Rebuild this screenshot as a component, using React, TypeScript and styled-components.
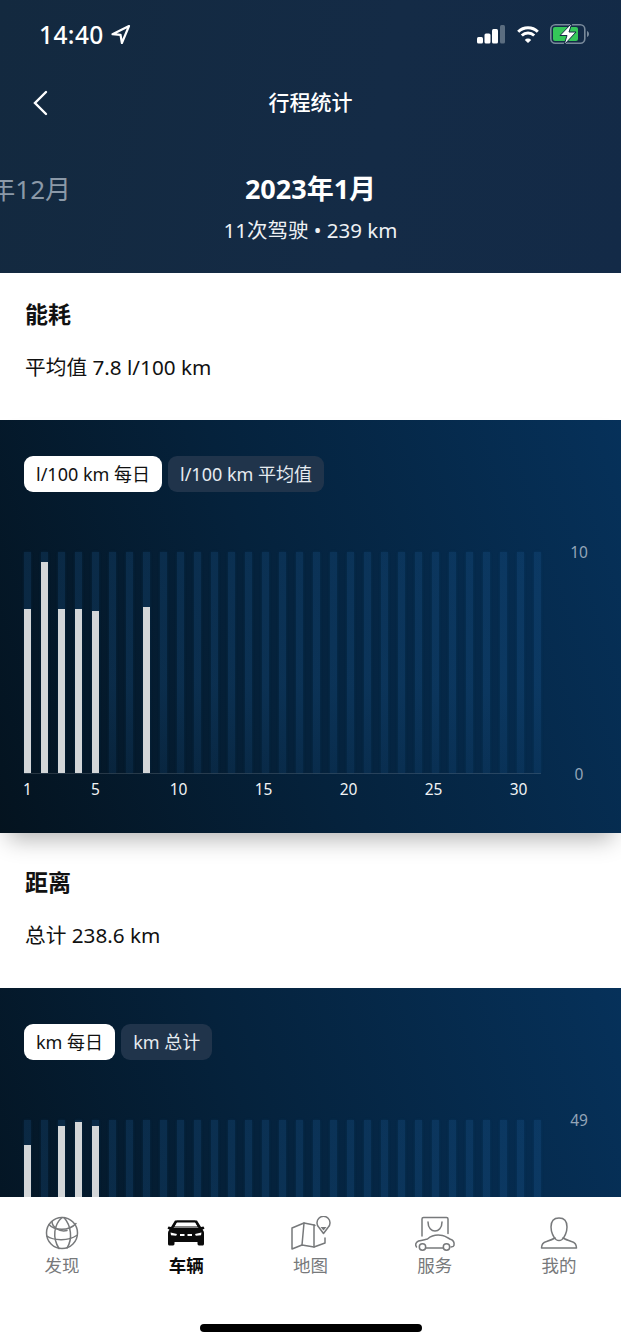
import React from 'react';
import styled, { createGlobalStyle } from 'styled-components';

const GlobalStyle = createGlobalStyle`
  html, body { margin: 0; padding: 0; background: #fff; }
  body { font-family: "Noto Sans", "Noto Sans CJK SC", sans-serif; }
  * { box-sizing: border-box; }
`;

const Page = styled.div`
  width: 621px;
  height: 1344px;
  display: flex;
  flex-direction: column;
  overflow: hidden;
`;

const Header = styled.header`
  height: 273px;
  flex: none;
  background: linear-gradient(100deg, #13293f 0%, #142b46 60%, #132a47 100%);
  color: #fff;
`;

const StatusBar = styled.div`
  height: 68px;
  padding: 0 31px 0 39px;
  display: flex;
  align-items: center;
  justify-content: space-between;
`;

const Time = styled.div`
  display: flex;
  align-items: center;
  gap: 6px;
  font-size: 24.5px;
  font-weight: 500;
  letter-spacing: 0.4px;
`;

const StatusIcons = styled.div`
  display: flex;
  align-items: center;
  gap: 11px;
`;

const NavBar = styled.div`
  height: 66px;
  display: grid;
  grid-template-columns: 82px 1fr 82px;
  align-items: center;
`;

const BackButton = styled.div`
  padding: 4px 0 0 32px;
  display: flex;
  align-items: center;
`;

const NavTitle = styled.div`
  text-align: center;
  font-size: 21px;
  font-weight: 500;
`;

const MonthRow = styled.div`
  margin-top: 34px;
  display: grid;
  grid-template-columns: 71px 1fr 71px;
  align-items: center;
  height: 38px;
`;

const PrevMonth = styled.div`
  overflow: hidden;
  display: flex;
  justify-content: flex-end;
  white-space: nowrap;
  font-size: 26px;
  color: #8b99a8;
`;

const CurrentMonth = styled.div`
  text-align: center;
  font-size: 27px;
  font-weight: 700;
`;

const Summary = styled.div`
  margin-top: 8px;
  text-align: center;
  font-size: 20.5px;
  color: #eef1f4;
`;

const Scroller = styled.main`
  flex: 1;
  min-height: 0;
  overflow: hidden;
`;

const InfoBlock = styled.section<{ $height: number; $top: number }>`
  height: ${(p) => p.$height}px;
  padding: ${(p) => p.$top}px 25px 0;
  background: #fff;
  color: #111;
`;

const InfoTitle = styled.h2`
  margin: 0;
  font-size: 23px;
  line-height: 32px;
  font-weight: 700;
`;

const InfoLine = styled.p`
  margin: 21px 0 0;
  font-size: 20.7px;
  line-height: 32px;
`;

const ChartPanel = styled.section`
  position: relative;
  z-index: 1;
  height: 413px;
  padding: 36px 0 0 24px;
  background: linear-gradient(72deg, #04131f 0%, #05223c 45%, #06315a 100%);
  box-shadow: 0 14px 22px -8px rgba(0, 0, 0, 0.3);
`;

const Pills = styled.div`
  display: flex;
  gap: 6px;
`;

const Pill = styled.div<{ $active?: boolean }>`
  height: 36px;
  padding: 0 12px 2px;
  display: flex;
  align-items: center;
  border-radius: 9px;
  font-size: 18px;
  white-space: nowrap;
  background: ${(p) => (p.$active ? '#fff' : '#20344b')};
  color: ${(p) => (p.$active ? '#111' : '#e6ebf0')};
`;

const PlotRow = styled.div`
  margin-top: 60px;
  display: flex;
  height: 222px;
`;

const Bars = styled.div`
  display: grid;
  grid-template-columns: repeat(31, 7px);
  column-gap: 10px;
  width: 517px;
  border-bottom: 1px solid rgba(255, 255, 255, 0.14);
`;

const Track = styled.div`
  height: 221px;
  display: flex;
  align-items: flex-end;
  background: linear-gradient(180deg, rgba(34, 106, 172, 0.2) 0%, rgba(34, 106, 172, 0.22) 60%, rgba(34, 106, 172, 0.14) 100%);
  box-shadow: 0 0 3px rgba(34, 106, 172, 0.14);
`;

const Fill = styled.div`
  width: 100%;
  background: #d3d6d8;
`;

const YAxis = styled.div`
  flex: 1;
  margin: -10px 0 -10px;
  padding-right: 4px;
  display: flex;
  flex-direction: column;
  justify-content: space-between;
  align-items: center;
  font-size: 15.5px;
  line-height: 20px;
  color: #93a5b8;
`;

const XAxis = styled.div`
  margin-top: 5px;
  display: grid;
  grid-template-columns: repeat(31, 7px);
  column-gap: 10px;
  width: 517px;
  font-size: 15.5px;
  line-height: 20px;
  color: #f1f3f5;
`;

const Tick = styled.div<{ $wide?: boolean }>`
  display: flex;
  justify-content: center;
  white-space: nowrap;
  padding-right: ${(p) => (p.$wide ? 4 : 0)}px;
`;

const TabBar = styled.nav`
  position: relative;
  z-index: 2;
  flex: none;
  height: 147px;
  background: #fff;
  display: flex;
  flex-direction: column;
`;

const Tabs = styled.div`
  display: grid;
  grid-template-columns: repeat(5, 1fr);
  padding-top: 19px;
`;

const Tab = styled.div<{ $active?: boolean }>`
  display: flex;
  flex-direction: column;
  align-items: center;
  font-size: 17.5px;
  line-height: 24px;
  font-weight: ${(p) => (p.$active ? 700 : 400)};
  color: ${(p) => (p.$active ? '#0b0b0b' : '#77797b')};
`;

const TabIcon = styled.svg`
  display: block;
  width: 44px;
  height: 37px;
  fill: none;
  stroke: #77797b;
  stroke-width: 1.5;
  stroke-linecap: round;
  stroke-linejoin: round;
`;

const HomeIndicator = styled.div`
  width: 222px;
  height: 8px;
  margin: 47px auto 0;
  border-radius: 4px;
  background: #000;
`;

const LocationArrow = () => (
  <svg width="21" height="21" viewBox="0 0 21 21" fill="none" stroke="#fff" strokeWidth="2.2" strokeLinejoin="round">
    <path d="M19 2 2.5 10.2l8 .6 1.4 8.2L19 2Z" />
  </svg>
);

const SignalIcon = () => (
  <svg width="29" height="20" viewBox="0 0 29 20">
    <rect x="0" y="13" width="6" height="6.5" rx="1.5" fill="#fff" />
    <rect x="7.5" y="9.5" width="6" height="10" rx="1.5" fill="#fff" />
    <rect x="15" y="5" width="6" height="14.5" rx="1.5" fill="#fff" />
    <rect x="23" y="1" width="5" height="18.5" rx="1.5" fill="#5b6d80" />
  </svg>
);

const WifiIcon = () => (
  <svg width="22" height="19" viewBox="0 0 22 18" fill="none" stroke="#fff" strokeWidth="3">
    <path d="M1.200 6.200a14 14 0 0 1 19.600 0" />
    <path d="M4.800 10a9 9 0 0 1 12.400 0" />
    <path d="M11 17.600 7.800 14.400a4.500 4.500 0 0 1 6.400 0L11 17.600Z" fill="#fff" stroke="none" />
  </svg>
);

const BatteryIcon = () => (
  <svg width="40" height="20" viewBox="0 0 40 20">
    <rect x="0.8" y="0.8" width="34" height="18.4" rx="4.5" fill="none" stroke="#78899a" strokeWidth="1.6" />
    <rect x="3" y="3" width="25" height="14" rx="2" fill="#35c759" />
    <path d="M37 7v6c1.400-.5 2-1.600 2-3s-.6-2.500-2-3Z" fill="#78899a" />
    <path d="M22 -1 10 11.500h7L14 21 26 8h-7l3-9Z" fill="#fff" stroke="#142b46" strokeWidth="1" />
  </svg>
);

const BackIcon = () => (
  <svg width="16" height="26" viewBox="0 0 16 26" fill="none" stroke="#fff" strokeWidth="2.4" strokeLinecap="round">
    <path d="M14 2 3 13l11 11" />
  </svg>
);

const GlobeIcon = () => (
  <TabIcon viewBox="0 0 44 37">
    <circle cx="22" cy="17" r="15.500" />
    <path d="M9 8.500c5 6 20 7 27-1" />
    <path d="M6.800 20c7 5 22 5 29.800-.5" />
    <path d="M22 1.500c-8 7-10 20-3 31" />
    <path d="M24 1.600c7 8 9 21 3 30.500" />
    <path d="M12 5.500c0 5 7 11 15 9" />
  </TabIcon>
);

const CarIcon = () => (
  <TabIcon viewBox="0 0 44 37">
    <path
      d="M11 4.500h22l4 6.500 2.500-.5 1 2-2 1.200c1 1 1.500 2 1.500 3.500v10.500c0 1-.6 1.800-1.500 1.800h-3.500c-1 0-1.500-.8-1.500-2v-1.500H10.500v1.500c0 1.200-.5 2-1.500 2H5.500C4.600 29.500 4 28.700 4 27.700V17.200c0-1.500.5-2.500 1.500-3.500l-2-1.200 1-2L7 11l4-6.500Z"
      fill="#0b0b0b"
      stroke="none"
    />
    <path d="M12.500 6.500h19l3 5.500h-25l3-5.500Z" fill="#fff" stroke="none" />
    <path d="M13 5h18l3.500 6h-25L13 5Z" fill="none" stroke="#0b0b0b" strokeWidth="1.200" />
    <path d="M6.500 16.500l6.500 1.500-.8 1.800-5.200-.6-.5-2.700ZM37.500 16.500 31 18l.8 1.800 5.200-.6.500-2.700Z" fill="#fff" stroke="none" />
    <path d="M16 18h4.500v2H16ZM23.500 18H28v2h-4.500Z" fill="#fff" stroke="none" />
  </TabIcon>
);

const MapIcon = () => (
  <TabIcon viewBox="0 0 44 37">
    <path d="M27 9.500 26 9l-10-2L4 12v21l10-4 12 2 11-4v-5" />
    <path d="M16 7 14 29M26 9v22" />
    <path d="M35.500 17.500 31 11.500a6.500 6.500 0 1 1 9 0l-4.500 6Z" />
    <path d="M32.500 11 35.500 14.500 38.500 11Z" fill="#77797b" stroke="none" />
  </TabIcon>
);

const ServiceIcon = () => (
  <TabIcon viewBox="0 0 44 37">
    <path d="M9 20V3c0-1 .5-1.500 1.500-1.500h23c1 0 1.500.5 1.500 1.500v14.500" />
    <path d="M15 6c0 12 14 12 14 0" />
    <path d="M3.500 31c-1.500-2 -1-4.500 2-6 4-1 7-1.500 9-2 4-3.500 10-4.500 15-3.500 3 .6 6 2.800 8 3.800 3 1 4 3 3.500 6-.2 1-1 1.500-3 1.700" />
    <path d="M13 32h17" />
    <circle cx="9.500" cy="31" r="3.200" />
    <circle cx="33.500" cy="31" r="3.200" />
  </TabIcon>
);

const PersonIcon = () => (
  <TabIcon viewBox="0 0 44 37">
    <path d="M22 2c-5.500 0-8 3.500-8 9 0 5 2.500 10.500 5 12.500 1.800 1.300 4.200 1.300 6 0 2.500-2 5-7.500 5-12.500 0-5.500-2.500-9-8-9Z" />
    <path d="M4.500 32c0-3.500 1.500-5.500 5-6.500 3-1 6-2 8.500-3.500M39.500 32c0-3.500-1.500-5.500-5-6.500-3-1-6-2-8.500-3.500M4.500 32h35" />
  </TabIcon>
);

type ChartProps = {
  pills: string[];
  values: number[];
  max: number;
};

const PLOT_HEIGHT = 221;
const TICKS = [1, 5, 10, 15, 20, 25, 30];

const Chart = ({ pills, values, max }: ChartProps) => (
  <ChartPanel>
    <Pills>
      {pills.map((label, i) => (
        <Pill key={label} $active={i === 0}>{label}</Pill>
      ))}
    </Pills>
    <PlotRow>
      <Bars>
        {Array.from({ length: 31 }, (_, i) => (
          <Track key={i}>
            {values[i] ? <Fill style={{ height: (values[i] / max) * PLOT_HEIGHT }} /> : null}
          </Track>
        ))}
      </Bars>
      <YAxis>
        <span>{max}</span>
        <span>0</span>
      </YAxis>
    </PlotRow>
    <XAxis>
      {Array.from({ length: 31 }, (_, i) => (
        <Tick key={i} $wide={i + 1 >= 10}>{TICKS.includes(i + 1) ? i + 1 : ''}</Tick>
      ))}
    </XAxis>
  </ChartPanel>
);

const App = () => (
  <Page lang="zh-CN">
    <GlobalStyle />
    <Header>
      <StatusBar>
        <Time>14:40 <LocationArrow /></Time>
        <StatusIcons>
          <SignalIcon />
          <WifiIcon />
          <BatteryIcon />
        </StatusIcons>
      </StatusBar>
      <NavBar>
        <BackButton><BackIcon /></BackButton>
        <NavTitle>行程统计</NavTitle>
        <div />
      </NavBar>
      <MonthRow>
        <PrevMonth>2022年12月</PrevMonth>
        <CurrentMonth>2023年1月</CurrentMonth>
        <div />
      </MonthRow>
      <Summary>11次驾驶 • 239 km</Summary>
    </Header>
    <Scroller>
      <InfoBlock $height={147} $top={25}>
        <InfoTitle>能耗</InfoTitle>
        <InfoLine>平均值 7.8 l/100 km</InfoLine>
      </InfoBlock>
      <Chart
        pills={['l/100 km 每日', 'l/100 km 平均值']}
        values={[7.42, 9.55, 7.42, 7.42, 7.33, 0, 0, 7.51]}
        max={10}
      />
      <InfoBlock $height={155} $top={33}>
        <InfoTitle>距离</InfoTitle>
        <InfoLine>总计 238.6 km</InfoLine>
      </InfoBlock>
      <Chart
        pills={['km 每日', 'km 总计']}
        values={[43.5, 0, 47.7, 48.6, 47.7]}
        max={49}
      />
    </Scroller>
    <TabBar>
      <Tabs>
        <Tab><GlobeIcon />发现</Tab>
        <Tab $active><CarIcon />车辆</Tab>
        <Tab><MapIcon />地图</Tab>
        <Tab><ServiceIcon />服务</Tab>
        <Tab><PersonIcon />我的</Tab>
      </Tabs>
      <HomeIndicator />
    </TabBar>
  </Page>
);

export default App;
